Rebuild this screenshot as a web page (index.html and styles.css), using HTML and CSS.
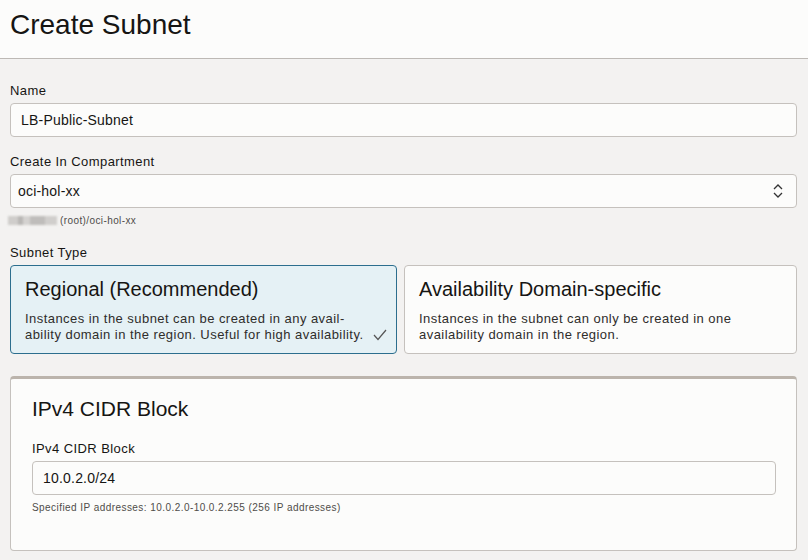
FILE: index.html
```html
<!DOCTYPE html>
<html lang="en">
<head>
<meta charset="utf-8">
<title>Create Subnet</title>
<link rel="stylesheet" href="styles.css">
</head>
<body>
<header class="page-header">
  <h1 class="title">Create Subnet</h1>
</header>
<main class="form">
  <div class="field">
    <label class="label">Name</label>
    <div class="input">LB-Public-Subnet</div>
  </div>
  <div class="field field-compartment">
    <label class="label">Create In Compartment</label>
    <div class="input select">
      <span>oci-hol-xx</span>
      <svg class="chev" width="12" height="16" viewBox="0 0 12 16" fill="none" stroke="#333" stroke-width="1.3">
        <path d="M2 6 L6 2 L10 6"/>
        <path d="M2 10 L6 14 L10 10"/>
      </svg>
    </div>
    <div class="path"><span class="blur"></span>(root)/oci-hol-xx</div>
  </div>
  <div class="field">
    <label class="label">Subnet Type</label>
    <div class="cards">
      <div class="card selected">
        <div class="card-title">Regional (Recommended)</div>
        <div class="card-desc">Instances in the subnet can be created in any avail-<br>ability domain in the region. Useful for high availability.</div>
        <svg class="check" width="14" height="12" viewBox="0 0 14 12" fill="none" stroke="#555" stroke-width="1.2">
          <path d="M1 6 L5 10.5 L13 1"/>
        </svg>
      </div>
      <div class="card">
        <div class="card-title">Availability Domain-specific</div>
        <div class="card-desc">Instances in the subnet can only be created in one<br>availability domain in the region.</div>
      </div>
    </div>
  </div>
  <section class="panel">
    <h2 class="panel-title">IPv4 CIDR Block</h2>
    <label class="label">IPv4 CIDR Block</label>
    <div class="input">10.0.2.0/24</div>
    <div class="hint">Specified IP addresses: 10.0.2.0-10.0.2.255 (256 IP addresses)</div>
  </section>
</main>
</body>
</html>
```
FILE: styles.css
```css
* { box-sizing: border-box; }
html, body { margin: 0; padding: 0; }
body {
  font-family: "Liberation Sans", Arial, sans-serif;
  background: #f3f2f1;
  color: #161513;
  width: 808px;
  height: 560px;
  overflow: hidden;
}
.page-header {
  background: #fcfcfb;
  height: 59px;
  border-bottom: 1px solid #bdb9b5;
  padding: 9px 10px 0;
}
.title {
  margin: 0;
  font-size: 28px;
  font-weight: normal;
  line-height: 31px;
  color: #161513;
}
.form {
  padding: 24px 11px 0 10px;
}
.field { margin-bottom: 17px; }
.label {
  display: block;
  font-size: 13px;
  letter-spacing: 0.42px;
  line-height: 16px;
  margin-bottom: 4px;
  color: #161513;
}
.input {
  height: 34px;
  background: #fcfcfb;
  border: 1px solid #c5c1bd;
  border-radius: 4px;
  padding: 0 10px;
  font-size: 14px;
  letter-spacing: 0.2px;
  line-height: 32px;
  color: #161513;
}
.select {
  display: flex;
  align-items: center;
  justify-content: space-between;
  padding: 0 12px 0 7px;
}
.chev { display: block; }
.path {
  margin-top: 6px;
  font-size: 10px;
  letter-spacing: 0.4px;
  line-height: 13px;
  color: #4f4c49;
  display: flex;
  align-items: center;
  margin-left: -2px;
}
.blur {
  display: inline-block;
  flex: none;
  width: 49px;
  height: 9px;
  margin-right: 3px;
  background: linear-gradient(90deg, #cfcdcb 0 20%, #b9b7b5 20% 30%, #d4d2d0 30% 45%, #bfbdbb 45% 75%, #d0cecc 75% 100%);
  filter: blur(0.8px);
}
.field-compartment { margin-bottom: 18px; }
.cards {
  display: grid;
  grid-template-columns: 387px 1fr;
  gap: 7px;
}
.card {
  position: relative;
  height: 89px;
  background: #fcfcfb;
  border: 1px solid #c5c1bd;
  border-radius: 4px;
  padding: 11px 14px 0;
}
.card.selected {
  background: #e5f1f5;
  border-color: #2c6e8e;
}
.card-title {
  font-size: 20px;
  line-height: 24px;
  margin-bottom: 10px;
  color: #161513;
}
.card-desc {
  font-size: 13px;
  letter-spacing: 0.45px;
  line-height: 16px;
  color: #2f2d2b;
}
.check {
  position: absolute;
  right: 9px;
  bottom: 12px;
}
.panel {
  margin-top: 22px;
  background: #fcfcfb;
  border: 1px solid #c5c1bd;
  border-top: 3px solid #bbb4ac;
  border-radius: 4px;
  height: 175px;
  padding: 18px 20px 0 21px;
}
.panel-title {
  margin: 0 0 20px;
  font-size: 21px;
  font-weight: normal;
  line-height: 24px;
  color: #161513;
}
.hint {
  margin-top: 6px;
  font-size: 10px;
  letter-spacing: 0.44px;
  line-height: 14px;
  color: #4f4c49;
}
```
